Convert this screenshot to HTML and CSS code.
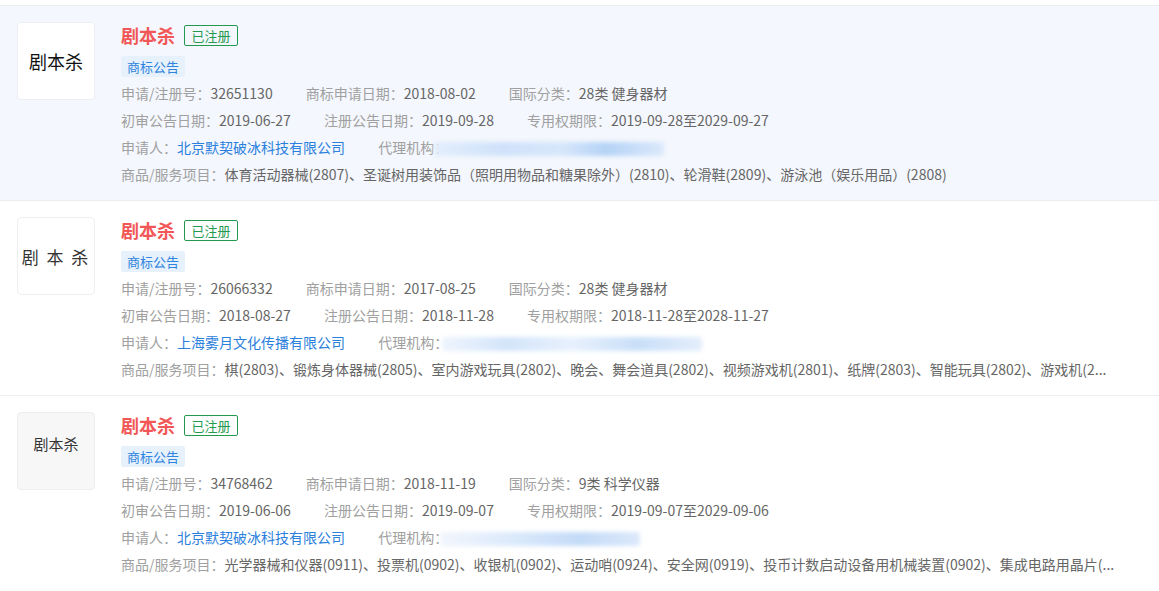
FILE: index.html
```html
<!DOCTYPE html>
<html lang="zh-CN">
<head>
<meta charset="utf-8">
<title>商标列表</title>
<link rel="stylesheet" href="styles.css">
</head>
<body>
<div class="list">
  <div class="row row-active">
    <div class="logo logo-a">剧本杀</div>
    <div class="info">
      <div class="title-line">
        <span class="name">剧本杀</span>
        <span class="status">已注册</span>
      </div>
      <div class="tag">商标公告</div>
      <div class="line">
        <span class="item"><span class="lab">申请/注册号：</span><span class="val">32651130</span></span>
        <span class="item"><span class="lab">商标申请日期：</span><span class="val">2018-08-02</span></span>
        <span class="item"><span class="lab">国际分类：</span><span class="val">28类 健身器材</span></span>
      </div>
      <div class="line">
        <span class="item"><span class="lab">初审公告日期：</span><span class="val">2019-06-27</span></span>
        <span class="item"><span class="lab">注册公告日期：</span><span class="val">2019-09-28</span></span>
        <span class="item"><span class="lab">专用权期限：</span><span class="val">2019-09-28至2029-09-27</span></span>
      </div>
      <div class="line">
        <span class="item"><span class="lab">申请人：</span><span class="link">北京默契破冰科技有限公司</span></span>
        <span class="item"><span class="lab">代理机构：</span><span class="blur blur-1"></span></span>
      </div>
      <div class="line"><span class="lab">商品/服务项目：</span><span class="val">体育活动器械(2807)、圣诞树用装饰品（照明用物品和糖果除外）(2810)、轮滑鞋(2809)、游泳池（娱乐用品）(2808)</span></div>
    </div>
  </div>

  <div class="row">
    <div class="logo logo-b">剧 本 杀</div>
    <div class="info">
      <div class="title-line">
        <span class="name">剧本杀</span>
        <span class="status">已注册</span>
      </div>
      <div class="tag">商标公告</div>
      <div class="line">
        <span class="item"><span class="lab">申请/注册号：</span><span class="val">26066332</span></span>
        <span class="item"><span class="lab">商标申请日期：</span><span class="val">2017-08-25</span></span>
        <span class="item"><span class="lab">国际分类：</span><span class="val">28类 健身器材</span></span>
      </div>
      <div class="line">
        <span class="item"><span class="lab">初审公告日期：</span><span class="val">2018-08-27</span></span>
        <span class="item"><span class="lab">注册公告日期：</span><span class="val">2018-11-28</span></span>
        <span class="item"><span class="lab">专用权期限：</span><span class="val">2018-11-28至2028-11-27</span></span>
      </div>
      <div class="line">
        <span class="item"><span class="lab">申请人：</span><span class="link">上海雾月文化传播有限公司</span></span>
        <span class="item"><span class="lab">代理机构：</span><span class="blur blur-2"></span></span>
      </div>
      <div class="line"><span class="lab">商品/服务项目：</span><span class="val">棋(2803)、锻炼身体器械(2805)、室内游戏玩具(2802)、晚会、舞会道具(2802)、视频游戏机(2801)、纸牌(2803)、智能玩具(2802)、游戏机(2...</span></div>
    </div>
  </div>

  <div class="row">
    <div class="logo logo-c">剧本杀</div>
    <div class="info">
      <div class="title-line">
        <span class="name">剧本杀</span>
        <span class="status">已注册</span>
      </div>
      <div class="tag">商标公告</div>
      <div class="line">
        <span class="item"><span class="lab">申请/注册号：</span><span class="val">34768462</span></span>
        <span class="item"><span class="lab">商标申请日期：</span><span class="val">2018-11-19</span></span>
        <span class="item"><span class="lab">国际分类：</span><span class="val">9类 科学仪器</span></span>
      </div>
      <div class="line">
        <span class="item"><span class="lab">初审公告日期：</span><span class="val">2019-06-06</span></span>
        <span class="item"><span class="lab">注册公告日期：</span><span class="val">2019-09-07</span></span>
        <span class="item"><span class="lab">专用权期限：</span><span class="val">2019-09-07至2029-09-06</span></span>
      </div>
      <div class="line">
        <span class="item"><span class="lab">申请人：</span><span class="link">北京默契破冰科技有限公司</span></span>
        <span class="item"><span class="lab">代理机构：</span><span class="blur blur-3"></span></span>
      </div>
      <div class="line"><span class="lab">商品/服务项目：</span><span class="val">光学器械和仪器(0911)、投票机(0902)、收银机(0902)、运动哨(0924)、安全网(0919)、投币计数启动设备用机械装置(0902)、集成电路用晶片(...</span></div>
    </div>
  </div>
</div>
</body>
</html>
```

FILE: styles.css
```css
html, body {
  margin: 0;
  padding: 0;
  background: #ffffff;
}

body {
  font-family: "Noto Sans CJK SC", "Noto Sans", sans-serif;
  font-size: 14px;
  color: #666666;
}

.list {
  margin-top: 5px;
}

.row {
  display: flex;
  align-items: flex-start;
  gap: 26px;
  height: 195px;
  box-sizing: border-box;
  padding: 16px 20px 0 17px;
  border-top: 1px solid #ebedf0;
}

.row-active {
  background: #f4f7fd;
}

.logo {
  flex: 0 0 auto;
  width: 78px;
  height: 78px;
  box-sizing: border-box;
  border: 1px solid #eceef1;
  border-radius: 4px;
  background: #ffffff;
  display: flex;
  align-items: center;
  justify-content: center;
  color: #222222;
  font-family: "Noto Sans CJK SC", sans-serif;
}

.logo-a {
  font-size: 18px;
  color: #111111;
}

.logo-b {
  font-size: 17px;
  color: #333333;
  letter-spacing: 2px;
}

.logo-c {
  background: #f7f7f7;
  font-size: 15px;
  color: #333333;
  align-items: flex-start;
  padding-top: 20px;
}

.info {
  flex: 1 1 auto;
  min-width: 0;
}

.title-line {
  display: flex;
  align-items: center;
  height: 26px;
}

.name {
  font-size: 18px;
  font-weight: 700;
  color: #f25757;
  line-height: 26px;
}

.status {
  margin-left: 9px;
  box-sizing: border-box;
  height: 21px;
  width: 54px;
  border: 1px solid #23994f;
  border-radius: 2px;
  color: #23994f;
  font-size: 13px;
  line-height: 19px;
  text-align: center;
}

.tag {
  display: inline-block;
  margin-top: 8px;
  margin-bottom: 3px;
  height: 21px;
  padding: 0 6px;
  background: #e6f1fc;
  border-radius: 2px;
  color: #2f84de;
  font-size: 13px;
  line-height: 21px;
}

.line {
  line-height: 27px;
  height: 27px;
  white-space: nowrap;
}

.item {
  margin-right: 30px;
}

.lab {
  color: #a0a0a0;
}

.val {
  color: #666666;
}

.link {
  color: #2b80dc;
}

.blur {
  display: inline-block;
  vertical-align: middle;
  height: 14px;
  filter: blur(2px);
  border-radius: 3px;
}

.blur-1 {
  width: 230px;
  margin-left: -14px;
  background: linear-gradient(90deg, #e3eefc 0%, #cfe2fa 30%, #d6e7fb 55%, #b5d3f6 75%, #dbe9fb 100%);
}

.blur-2 {
  width: 260px;
  margin-left: -6px;
  background: linear-gradient(90deg, #eef4fd 0%, #d3e5fa 25%, #e8f1fd 50%, #c9dff8 75%, #e4eefc 100%);
}

.blur-3 {
  width: 200px;
  margin-left: -8px;
  background: linear-gradient(90deg, #f2f6fd 0%, #d9e8fb 40%, #c3dbf7 70%, #dce9fb 100%);
}
```
